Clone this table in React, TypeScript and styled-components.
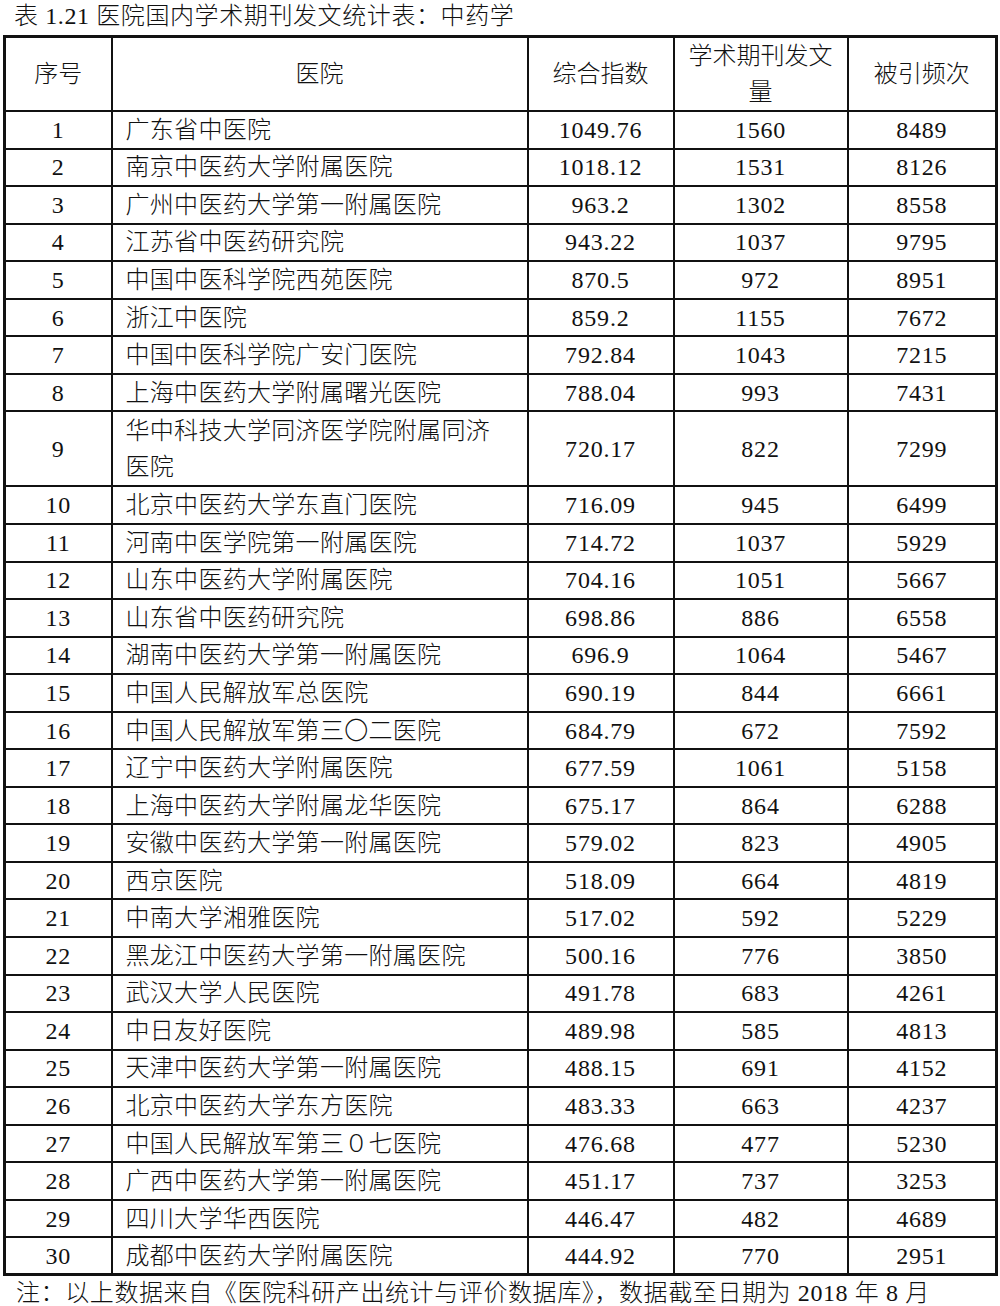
import React from 'react';
import styled, {createGlobalStyle} from "styled-components";

const GlobalStyle = createGlobalStyle`
  html, body {
    margin: 0;
    padding: 0;
    background: #fff;
  }
  body {
    font-family: "Liberation Serif", "Noto Sans CJK SC", serif;
    color: #111;
  }
`

type Row = [string, string, string, string];

const rows: Row[] = [
    ['广东省中医院', '1049.76', '1560', '8489'],
    ['南京中医药大学附属医院', '1018.12', '1531', '8126'],
    ['广州中医药大学第一附属医院', '963.2', '1302', '8558'],
    ['江苏省中医药研究院', '943.22', '1037', '9795'],
    ['中国中医科学院西苑医院', '870.5', '972', '8951'],
    ['浙江中医院', '859.2', '1155', '7672'],
    ['中国中医科学院广安门医院', '792.84', '1043', '7215'],
    ['上海中医药大学附属曙光医院', '788.04', '993', '7431'],
    ['华中科技大学同济医学院附属同济医院', '720.17', '822', '7299'],
    ['北京中医药大学东直门医院', '716.09', '945', '6499'],
    ['河南中医学院第一附属医院', '714.72', '1037', '5929'],
    ['山东中医药大学附属医院', '704.16', '1051', '5667'],
    ['山东省中医药研究院', '698.86', '886', '6558'],
    ['湖南中医药大学第一附属医院', '696.9', '1064', '5467'],
    ['中国人民解放军总医院', '690.19', '844', '6661'],
    ['中国人民解放军第三〇二医院', '684.79', '672', '7592'],
    ['辽宁中医药大学附属医院', '677.59', '1061', '5158'],
    ['上海中医药大学附属龙华医院', '675.17', '864', '6288'],
    ['安徽中医药大学第一附属医院', '579.02', '823', '4905'],
    ['西京医院', '518.09', '664', '4819'],
    ['中南大学湘雅医院', '517.02', '592', '5229'],
    ['黑龙江中医药大学第一附属医院', '500.16', '776', '3850'],
    ['武汉大学人民医院', '491.78', '683', '4261'],
    ['中日友好医院', '489.98', '585', '4813'],
    ['天津中医药大学第一附属医院', '488.15', '691', '4152'],
    ['北京中医药大学东方医院', '483.33', '663', '4237'],
    ['中国人民解放军第三０七医院', '476.68', '477', '5230'],
    ['广西中医药大学第一附属医院', '451.17', '737', '3253'],
    ['四川大学华西医院', '446.47', '482', '4689'],
    ['成都中医药大学附属医院', '444.92', '770', '2951'],
];

export default function App() {
    return (
        <Page>
            <GlobalStyle/>
            <Caption>表 1.21 医院国内学术期刊发文统计表：中药学</Caption>
            <Table>
                <colgroup>
                    <col style={{width: 107}}/>
                    <col style={{width: 416}}/>
                    <col style={{width: 146}}/>
                    <col style={{width: 174}}/>
                    <col/>
                </colgroup>
                <thead>
                <tr>
                    <HeadCell>序号</HeadCell>
                    <HeadCell>医院</HeadCell>
                    <HeadCell>综合指数</HeadCell>
                    <HeadCell>学术期刊发文<br/>量</HeadCell>
                    <HeadCell>被引频次</HeadCell>
                </tr>
                </thead>
                <tbody>
                {rows.map((r, i) => (
                    <BodyRow key={i} $tall={r[0].length > 15}>
                        <Cell>{i + 1}</Cell>
                        <NameCell>{r[0]}</NameCell>
                        <Cell>{r[1]}</Cell>
                        <Cell>{r[2]}</Cell>
                        <Cell>{r[3]}</Cell>
                    </BodyRow>
                ))}
                </tbody>
            </Table>
            <Note>注：以上数据来自《医院科研产出统计与评价数据库》，数据截至日期为 2018 年 8 月</Note>
        </Page>
    );
}

const Page = styled.div`
  width: 1000px;
  height: 1306px;
  overflow: hidden;
  font-size: 24px;
  font-weight: 300;
`

const Caption = styled.div`
  height: 35px;
  line-height: 33px;
  padding-left: 14px;
  letter-spacing: 0.6px;
  white-space: nowrap;
`

const Table = styled.table`
  margin-left: 3px;
  width: 995px;
  table-layout: fixed;
  border-collapse: collapse;
  border: 3px solid #111;
`

const HeadCell = styled.th`
  height: 72px;
  padding: 0;
  font-weight: 300;
  line-height: 36px;
  text-align: center;
  vertical-align: middle;
  border: 2px solid #111;
`

const BodyRow = styled.tr<{ $tall?: boolean }>`
  height: ${p => (p.$tall ? '75.1px' : '37.55px')};

  td {
    line-height: ${p => (p.$tall ? '36px' : '32px')};
  }
`

const Cell = styled.td`
  padding: 0;
  text-align: center;
  vertical-align: middle;
  letter-spacing: 0.8px;
  border: 2px solid #111;
`

const NameCell = styled(Cell)`
  text-align: left;
  letter-spacing: 0.3px;
  padding: 0 30px 0 13px;
`

const Note = styled.div`
  padding-left: 16px;
  padding-top: 2px;
  line-height: 30px;
  letter-spacing: 0.6px;
  white-space: nowrap;
`
